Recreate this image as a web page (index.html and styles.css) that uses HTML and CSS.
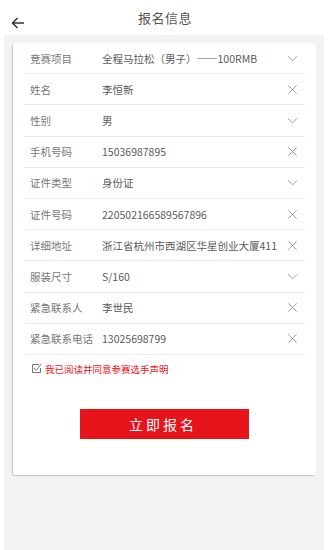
FILE: index.html
```html
<!doctype html>
<html lang="zh-CN">
<head>
  <meta charset="UTF-8">
  <meta name="viewport" content="width=device-width, initial-scale=1.0">
  <title>报名信息</title>
  <link rel="stylesheet" href="styles.css">
</head>
<body>
  <svg class="defs" width="0" height="0">
    <defs>
      <symbol id="down" viewBox="0 0 12 12"><path d="M1 3.5l5 5 5-5" fill="none" stroke="#888" stroke-width="0.9"/></symbol>
      <symbol id="clear" viewBox="0 0 12 12"><path d="M1.5 1.5l9 9M10.5 1.5l-9 9" fill="none" stroke="#888" stroke-width="0.9"/></symbol>
    </defs>
  </svg>

  <header class="topbar">
    <span class="back">
      <svg width="14" height="12" viewBox="0 0 14 12"><path d="M13 6H1.5M6.5 1L1.5 6l5 5" fill="none" stroke="#333" stroke-width="1.5"/></svg>
    </span>
    <h1>报名信息</h1>
  </header>

  <main class="page">
    <div class="card">
      <div class="row"><span class="label">竞赛项目</span><span class="value">全程马拉松（男子）——100RMB</span><svg class="icon"><use href="#down"/></svg></div>
      <div class="row"><span class="label">姓名</span><span class="value">李恒新</span><svg class="icon"><use href="#clear"/></svg></div>
      <div class="row"><span class="label">性别</span><span class="value">男</span><svg class="icon"><use href="#down"/></svg></div>
      <div class="row"><span class="label">手机号码</span><span class="value">15036987895</span><svg class="icon"><use href="#clear"/></svg></div>
      <div class="row"><span class="label">证件类型</span><span class="value">身份证</span><svg class="icon"><use href="#down"/></svg></div>
      <div class="row"><span class="label">证件号码</span><span class="value">220502166589567896</span><svg class="icon"><use href="#clear"/></svg></div>
      <div class="row"><span class="label">详细地址</span><span class="value">浙江省杭州市西湖区华星创业大厦411</span><svg class="icon"><use href="#clear"/></svg></div>
      <div class="row"><span class="label">服装尺寸</span><span class="value">S/160</span><svg class="icon"><use href="#down"/></svg></div>
      <div class="row"><span class="label">紧急联系人</span><span class="value">李世民</span><svg class="icon"><use href="#clear"/></svg></div>
      <div class="row"><span class="label">紧急联系电话</span><span class="value">13025698799</span><svg class="icon"><use href="#clear"/></svg></div>

      <label class="agree">
        <svg width="11" height="11" viewBox="0 0 11 11"><path d="M8 1.5H1.5v8h8V5" fill="none" stroke="#777" stroke-width="1"/><path d="M3 5l2.2 2.4L10.3 0.8" fill="none" stroke="#777" stroke-width="1"/></svg>
        我已阅读并同意参赛选手声明
      </label>

      <button class="submit">立即报名</button>
    </div>
  </main>
</body>
</html>
```

FILE: styles.css
```css
body {
  margin: 0;
  font-family: "Noto Sans CJK SC", "Liberation Sans", sans-serif;
  background: #fff;
  color: #555;
}

.defs {
  position: absolute;
}

.topbar {
  height: 35px;
  display: flex;
  align-items: center;
  justify-content: center;
  position: relative;
}

.back {
  position: absolute;
  left: 11px;
  top: 10px;
}

.topbar h1 {
  margin: 0;
  font-size: 13px;
  font-weight: normal;
  color: #555;
  letter-spacing: 0.5px;
}

.page {
  margin: 0 6px 0 4px;
  background: #f2f2f2;
  height: 515px;
  padding: 8px 8px 0 9px;
  box-sizing: border-box;
}

.card {
  background: #fff;
  height: 432px;
  padding: 0 11px;
  box-shadow: -1px 1px 1px rgba(0, 0, 0, 0.18);
  border-radius: 2px;
}

.row {
  height: 30.2px;
  display: flex;
  align-items: center;
  border-bottom: 1px solid #ececec;
  font-size: 10.5px;
}

.label {
  width: 72px;
  padding-left: 6px;
  color: #777;
  white-space: nowrap;
}

.value {
  flex: 1;
  color: #5a5a5a;
  white-space: nowrap;
}

.icon {
  width: 11px;
  height: 11px;
  margin-right: 7px;
}

.agree {
  display: flex;
  align-items: center;
  gap: 3px;
  margin: 7px 0 0 7px;
  font-size: 9.5px;
  color: #e8141b;
}

.submit {
  display: block;
  margin: 33px auto 0;
  width: 169px;
  height: 30px;
  border: none;
  background: #e8141b;
  color: #fff;
  font-family: inherit;
  font-size: 14px;
  letter-spacing: 3px;
  padding-left: 3px;
}
```
